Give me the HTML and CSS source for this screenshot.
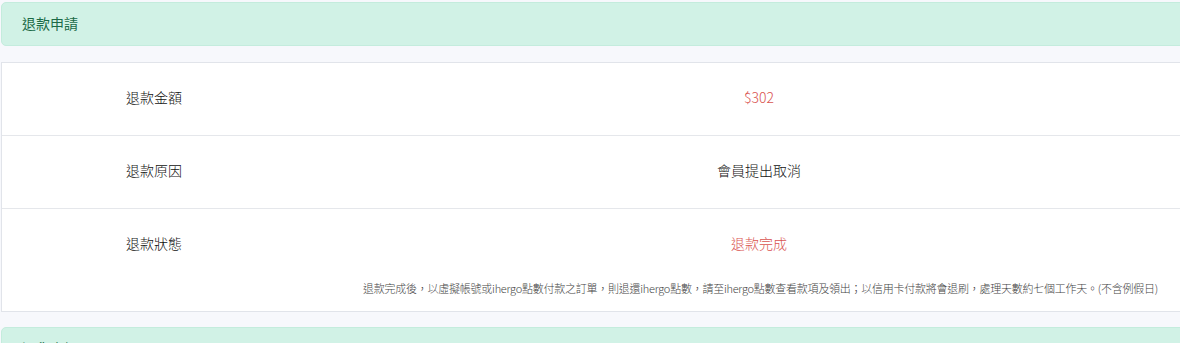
FILE: index.html
```html
<!DOCTYPE html>
<html lang="zh-Hant">
<head>
  <meta charset="UTF-8">
  <title>退款申請</title>
  <link rel="stylesheet" href="styles.css">
</head>
<body>

  <div class="page">
    <!-- 退款申請 -->
    <div class="card-head">退款申請</div>

    <div class="info-table">
      <div class="info-row">
        <div class="info-label">退款金額</div>
        <div class="info-value red">$302</div>
      </div>
      <div class="info-row">
        <div class="info-label">退款原因</div>
        <div class="info-value">會員提出取消</div>
      </div>
      <div class="info-row last">
        <div class="info-main">
          <div class="info-label">退款狀態</div>
          <div class="info-value red">退款完成</div>
        </div>
        <div class="info-note">退款完成後，以虛擬帳號或ihergo點數付款之訂單，則退還ihergo點數，請至ihergo點數查看款項及領出；以信用卡付款將會退刷，處理天數約七個工作天。(不含例假日)</div>
      </div>
    </div>

    <div class="card-head">退貨資訊</div>
  </div>

</body>
</html>
```

FILE: styles.css
```css
body {
  margin: 0;
  font-family: "Noto Sans CJK TC", "Liberation Sans", sans-serif;
  font-weight: 300;
  background-color: #f7f8fc;
  overflow: hidden;
}

.page {
  width: 1212px;
  padding: 2px 0 0 1px;
}

.card-head {
  display: flex;
  align-items: center;
  padding: 0 20px 2px;
  box-sizing: border-box;
  height: 44px;
  background-color: #d1f2e6;
  border: 1px solid #c4ecdd;
  border-radius: 5px;
  color: #1b6a46;
  font-size: 14px;
  font-weight: 400;
}

.info-table {
  margin: 16px 0 15px;
  background-color: #fff;
  border: 1px solid #e1e4ea;
}

.info-row {
  display: flex;
  align-items: center;
  box-sizing: border-box;
  height: 73px;
  padding-bottom: 4px;
  border-bottom: 1px solid #e5e7eb;
  font-size: 14px;
  color: #111;
}

.info-row.last {
  display: block;
  height: 102px;
  border-bottom: none;
  padding-bottom: 0;
}

.info-main {
  display: flex;
  align-items: center;
  height: 68px;
}

.info-label {
  width: 304px;
  text-align: center;
}

.info-value {
  flex: 1;
  text-align: center;
}

.red {
  color: #d9534f;
}

.info-note {
  padding: 3px 54px 0 0;
  text-align: right;
  font-size: 11px;
  line-height: 16px;
  letter-spacing: -0.25px;
  color: #444;
}
```
